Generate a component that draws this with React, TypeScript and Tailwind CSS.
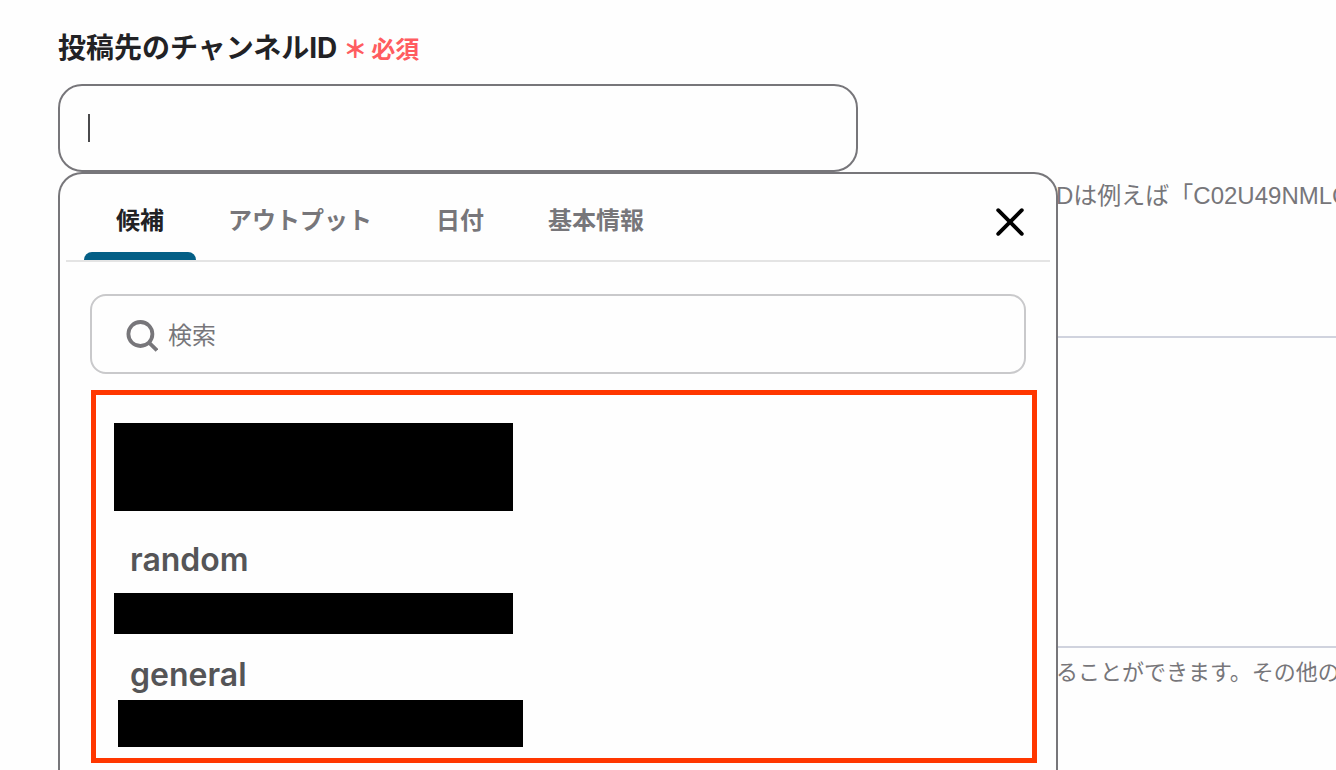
import React, { useState } from 'react';

interface Tab {
  id: string;
  label: string;
}

interface Candidate {
  name: string;
  rowClass: string;
  maskClass: string;
}

const tabs: Tab[] = [
  { id: 'candidates', label: '候補' },
  { id: 'output', label: 'アウトプット' },
  { id: 'date', label: '日付' },
  { id: 'basic', label: '基本情報' },
];

const candidates: Candidate[] = [
  { name: 'random', rowClass: 'h-[82px]', maskClass: 'h-[41px] w-[399px]' },
  { name: 'general', rowClass: 'h-[66px]', maskClass: 'ml-1 h-[47px] w-[405px]' },
];

const SearchIcon: React.FC = () => (
  <svg className="h-8 w-8 shrink-0" viewBox="0 0 32 32" fill="none" stroke="#77767a" strokeWidth="3.8" aria-hidden="true">
    <circle cx="14.4" cy="14" r="12" />
    <path d="M22.5 22.2 31 30.4" />
  </svg>
);

const CloseIcon: React.FC = () => (
  <svg className="h-7 w-7" viewBox="0 0 28 28" fill="none" stroke="#000" strokeWidth="3.8" strokeLinecap="round" aria-hidden="true">
    <path d="M2.2 2.2 25.8 25.8M25.8 2.2 2.2 25.8" />
  </svg>
);

const SuggestPanel: React.FC = () => {
  const [active, setActive] = useState('candidates');

  return (
    <div className="relative z-10 w-[1000px] shrink-0 rounded-t-3xl border-2 border-b-0 border-[#77767a] bg-[#fefefe]">
      <div className="mx-1.5 flex h-[88px] items-stretch justify-between border-b-2 border-[#e4e4e4] pr-[26px] pl-[18px]">
        <div role="tablist" className="flex">
          {tabs.map((tab) => (
            <button
              key={tab.id}
              type="button"
              role="tab"
              aria-selected={active === tab.id}
              onClick={() => setActive(tab.id)}
              className={`flex flex-col text-2xl leading-8 font-bold ${
                active === tab.id ? 'text-[#222225]' : 'text-[#77767a]'
              }`}
            >
              <span className="flex flex-1 items-center px-8 pt-4">{tab.label}</span>
              <span className={`h-2 w-full rounded-t-lg ${active === tab.id ? 'bg-[#045f86]' : ''}`} />
            </button>
          ))}
        </div>
        <button type="button" aria-label="閉じる" className="flex items-center pt-2.5">
          <CloseIcon />
        </button>
      </div>

      {/* Search box */}
      <div className="mx-[30px] mt-8 flex h-20 items-center gap-2.5 rounded-2xl border-2 border-[#c9c9cb] px-[34px] pt-1">
        <SearchIcon />
        <input
          type="search"
          aria-label="検索"
          placeholder="検索"
          className="min-w-0 flex-1 bg-transparent text-2xl leading-8 outline-none placeholder:text-[#77767a]"
        />
      </div>

      {/* Channel candidates */}
      <div className="mt-4 mr-[19px] ml-[31px] border-[5px] border-[#ff3700] pt-7 pb-[11px] pl-[18px]">
        <div className="h-[88px] w-[399px] bg-black" />
        {candidates.map((item) => (
          <React.Fragment key={item.name}>
            <button
              type="button"
              className={`flex w-full items-center pt-4 pl-4 text-[32px] leading-10 font-semibold text-[#555557] ${item.rowClass}`}
            >
              {item.name}
            </button>
            <div className={`bg-black ${item.maskClass}`} />
          </React.Fragment>
        ))}
      </div>
    </div>
  );
};

const App: React.FC = () => {
  return (
    <main className="flex min-h-screen flex-col overflow-hidden bg-[#fefefe] pt-7 pl-[58px] font-[Inter,'Noto_Sans_CJK_JP',sans-serif]">
      <label htmlFor="channel-id" className="flex h-14 items-start gap-1.5 whitespace-nowrap">
        <span className="text-[28px] leading-10 font-bold text-[#222225]">投稿先のチャンネルID</span>
        <span className="flex gap-1 pt-0.5 text-2xl leading-10 font-bold text-[#ff5c60]">
          <span className="font-black">＊</span>
          <span>必須</span>
        </span>
      </label>

      <div className="flex h-[88px] w-[800px] items-center rounded-3xl border-2 border-[#77767a] px-7">
        <span className="h-7 w-0.5 bg-[#4a4a4c]" />
        <input id="channel-id" type="text" className="h-10 min-w-0 flex-1 bg-transparent text-[28px] outline-none" />
      </div>

      <div className="flex flex-1">
        <SuggestPanel />
        <div className="-ml-0.5 min-w-0 flex-1 overflow-hidden whitespace-nowrap text-[#77767a]">
          <p className="h-[164px] pt-2 font-['Liberation_Sans','Noto_Sans_CJK_JP',sans-serif] text-2xl leading-8">
            Dは例えば「C02U49NMLC
          </p>
          <textarea
            aria-label="メッセージ"
            className="block h-[312px] w-full resize-none border-y-2 border-[#d0d3de] bg-transparent outline-none"
          />
          <p className="pt-2 text-[22px] leading-8">ることができます。その他の</p>
        </div>
      </div>
    </main>
  );
};

export default App;
